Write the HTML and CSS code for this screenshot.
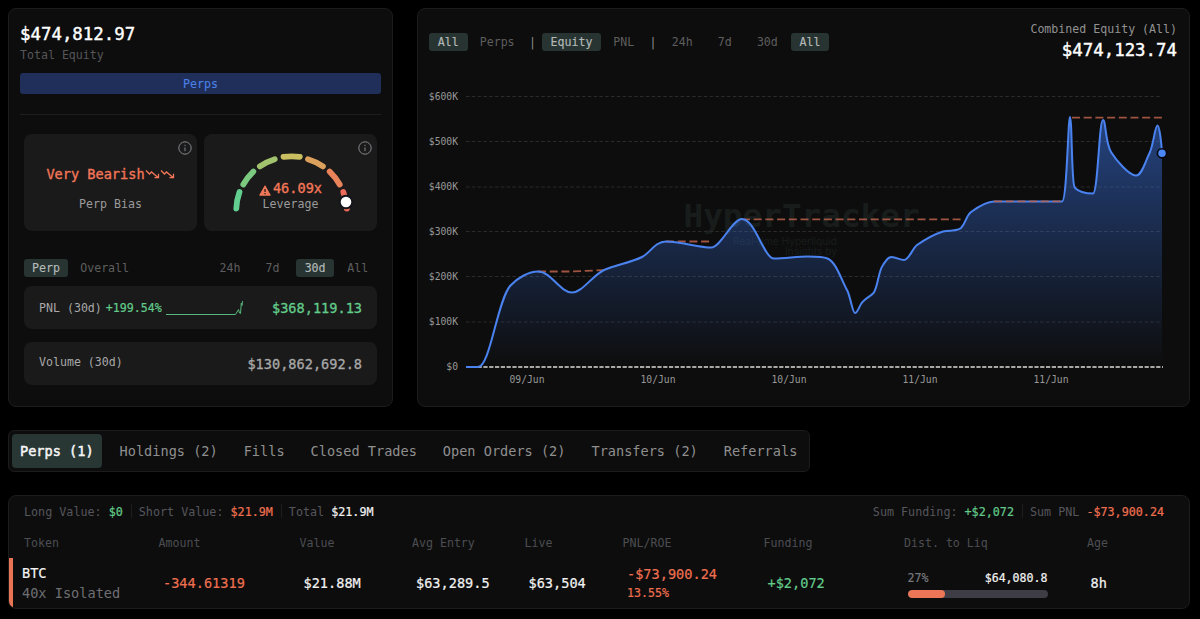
FILE: index.html
```
<!DOCTYPE html>
<html lang="en">
    <head>
        <meta charset="utf-8" />
        <meta name="viewport" content="width=device-width, initial-scale=1" />
        <title>HyperTracker</title>
        <link rel="stylesheet" href="styles.css">
    </head>
    <body>
        <div class="top">
            <section class="card summary">
                <div class="equity">$474,812.97</div>
                <div class="equity-label">Total Equity</div>
                <div class="perps-bar">Perps</div>
                <hr />

                <div class="stats">
                    <div class="stat">
                        <svg class="info" viewBox="0 0 14 14"><circle cx="7" cy="7" r="6.2" /><path d="M7 6.4v3.8M7 3.8v1.2" /></svg>
                        <div class="stat-value">Very Bearish<svg class="trend" viewBox="0 0 15 10"><path d="M1 1.5l3.5 3.5 2-2 6.500 5.5M9.5 8.6h4V4.8" /></svg><svg class="trend" viewBox="0 0 15 10"><path d="M1 1.5l3.5 3.5 2-2 6.500 5.5M9.5 8.6h4V4.8" /></svg></div>
                        <div class="stat-label">Perp Bias</div>
                    </div>
                    <div class="stat leverage">
                        <svg class="info" viewBox="0 0 14 14"><circle cx="7" cy="7" r="6.2" /><path d="M7 6.4v3.8M7 3.8v1.2" /></svg>
                        <svg class="gauge" viewBox="203.5 134 173 97">
                            <path d="M235.8 208.5A55 55 0 0 1 239 192" stroke="#62ce8f" />
                            <path d="M242.8 184.5A55 55 0 0 1 252.8 171.6" stroke="#7cc980" />
                            <path d="M259.4 166.4A55 55 0 0 1 274.2 159.2" stroke="#a2c36e" />
                            <path d="M283 156.9A55 55 0 0 1 299.3 156.9" stroke="#c9be60" />
                            <path d="M307.5 159.2A55 55 0 0 1 322.4 166.4" stroke="#dba05c" />
                            <path d="M329.2 171.6A55 55 0 0 1 339.2 184.5" stroke="#e9845a" />
                            <path d="M342.8 192A55 55 0 0 1 346.3 208.6" stroke="#ec6a59" />
                            <circle cx="345.5" cy="202" r="6.3" fill="#fff" stroke="#14161c" stroke-width="2" />
                        </svg>
                        <div class="stat-value"><svg class="warn" viewBox="0 0 12 11"><path d="M6 .8L11.3 10.2H.7z" fill="#f07858" stroke="#f07858" stroke-linejoin="round" /><path d="M6 4v3M6 8v1.2" stroke="#1a1a1a" stroke-width="1.2" /></svg>46.09x</div>
                        <div class="stat-label">Leverage</div>
                    </div>
                </div>

                <div class="filters">
                    <span class="pill active">Perp</span>
                    <span class="pill">Overall</span>
                    <span class="spacer"></span>
                    <span class="pill">24h</span>
                    <span class="pill">7d</span>
                    <span class="pill active">30d</span>
                    <span class="pill">All</span>
                </div>

                <div class="line">
                    <span>PNL (30d)</span>
                    <span class="pct green">+199.54%</span>
                    <svg class="spark" viewBox="0 0 78 18"><path d="M0 15.5H69.5L71 13L72.5 10.5L73.5 14L74.5 14.5L75.3 4L76 6.5L76.5 2" /></svg>
                    <span class="amount green">$368,119.13</span>
                </div>
                <div class="line volume">
                    <span>Volume (30d)</span>
                    <span class="amount">$130,862,692.8</span>
                </div>
            </section>

            <section class="card chart-card">
                <div class="chart-head">
                    <div class="filters">
                        <span class="pill active">All</span>
                        <span class="pill">Perps</span>
                        <span class="sep">|</span>
                        <span class="pill active">Equity</span>
                        <span class="pill">PNL</span>
                        <span class="sep">|</span>
                        <span class="pill">24h</span>
                        <span class="pill">7d</span>
                        <span class="pill">30d</span>
                        <span class="pill active">All</span>
                    </div>
                    <div class="combined">
                        <div class="combined-label">Combined Equity (All)</div>
                        <div class="combined-value">$474,123.74</div>
                    </div>
                </div>
                <svg class="chart" viewBox="418 72 771 334">
                    <defs>
                        <linearGradient id="fill" gradientUnits="userSpaceOnUse" x1="0" y1="117" x2="0" y2="367">
                            <stop offset="0" stop-color="#3b76ea" stop-opacity="0.52" />
                            <stop offset="1" stop-color="#3b76ea" stop-opacity="0" />
                        </linearGradient>
                    </defs>
                    <g class="watermark">
                        <text class="wm-title" x="683.5" y="227">HyperTracker</text>
                        <text x="837" y="244.5">Real-time Hyperliquid</text>
                        <text x="837" y="255">Insights by</text>
                    </g>
                    <g class="grid">
                        <path d="M466 96.5H1162M466 141.5H1162M466 187H1162M466 231.5H1162M466 276.5H1162M466 322H1162" />
                    </g>
                    <path class="zero" d="M466 367H1163" />
                    <path fill="url(#fill)" d="M466 367H478C490 367 497 302 510 286C517 278 529 271.5 538 271.5C551 271.5 560 292.5 572 292.5C582 292.5 592 276 604 270C616 264.5 630 263 642 257C650 253 655 241.5 666 241.5C680 241.5 699 247.5 711 247.5C721 247.5 732 219 742 219C755 219 764 258.5 774 258.5C785 258.5 797 256.5 808 256.5C816 256.5 823 256.5 827.5 258.5C836 262 841 279 847.5 291C851 299 852.5 313 855 313C858 313 859.5 304 863.5 301C867 297.5 871 296 873.5 293C878 287 878 272 883 265C886 260.5 888 257 891.5 257C896 257 900 260 904 260C909 260 912 249 917 245C925 239.5 935 234 943 231.5C950 230 957 231.5 961 228C966 223 966 216 971 212C978 207 986 201.5 994 201.5H1062C1067 201.5 1068 117 1070 117C1072 117 1071.5 182 1074.5 187C1077 191.5 1086 193.5 1093 193.5C1098 193.5 1099 120 1103 120C1106 120 1105 142 1111 152C1116 160 1129 175.5 1136 175.5C1142 175.5 1145 162 1150 152C1154 142 1155 125.5 1157.5 125.5C1159.5 125.5 1161.5 144 1162 153V367Z" />
                    <g class="ath">
                        <path d="M538 271.5H572L606 270" />
                        <path d="M666 241.5H712" />
                        <path d="M742 219.3H963" />
                    </g>
                    <path class="curve" d="M466 367H478C490 367 497 302 510 286C517 278 529 271.5 538 271.5C551 271.5 560 292.5 572 292.5C582 292.5 592 276 604 270C616 264.5 630 263 642 257C650 253 655 241.5 666 241.5C680 241.5 699 247.5 711 247.5C721 247.5 732 219 742 219C755 219 764 258.5 774 258.5C785 258.5 797 256.5 808 256.5C816 256.5 823 256.5 827.5 258.5C836 262 841 279 847.5 291C851 299 852.5 313 855 313C858 313 859.5 304 863.5 301C867 297.5 871 296 873.5 293C878 287 878 272 883 265C886 260.5 888 257 891.5 257C896 257 900 260 904 260C909 260 912 249 917 245C925 239.5 935 234 943 231.5C950 230 957 231.5 961 228C966 223 966 216 971 212C978 207 986 201.5 994 201.5H1062C1067 201.5 1068 117 1070 117C1072 117 1071.5 182 1074.5 187C1077 191.5 1086 193.5 1093 193.5C1098 193.5 1099 120 1103 120C1106 120 1105 142 1111 152C1116 160 1129 175.5 1136 175.5C1142 175.5 1145 162 1150 152C1154 142 1155 125.5 1157.5 125.5C1159.5 125.5 1161.5 144 1162 153" />
                    <g class="ath">
                        <path d="M994 201.3H1062" />
                        <path d="M1072 117.6H1162" />
                    </g>
                    <circle cx="1162" cy="153.3" r="4.6" fill="#4a86f5" stroke="#05070d" stroke-width="1.6" />
                    <g class="axis y-axis">
                        <text x="458" y="99.5">$600K</text>
                        <text x="458" y="144.5">$500K</text>
                        <text x="458" y="190">$400K</text>
                        <text x="458" y="234.5">$300K</text>
                        <text x="458" y="279.5">$200K</text>
                        <text x="458" y="325">$100K</text>
                        <text x="458" y="370">$0</text>
                    </g>
                    <g class="axis x-axis">
                        <text x="527" y="383">09/Jun</text>
                        <text x="658" y="383">10/Jun</text>
                        <text x="789" y="383">10/Jun</text>
                        <text x="920" y="383">11/Jun</text>
                        <text x="1051" y="383">11/Jun</text>
                    </g>
                </svg>
            </section>
        </div>

        <nav class="tabs">
            <a class="active">Perps (1)</a>
            <a>Holdings (2)</a>
            <a>Fills</a>
            <a>Closed Trades</a>
            <a>Open Orders (2)</a>
            <a>Transfers (2)</a>
            <a>Referrals</a>
        </nav>

        <section class="card positions">
            <div class="totals">
                <span>Long Value: <b class="green">$0</b></span>
                <span>Short Value: <b class="red">$21.9M</b></span>
                <span>Total <b>$21.9M</b></span>
                <span class="spacer"></span>
                <span>Sum Funding: <b class="green">+$2,072</b></span>
                <span>Sum PNL <b class="red">-$73,900.24</b></span>
            </div>
            <div class="row head">
                <span>Token</span>
                <span>Amount</span>
                <span>Value</span>
                <span>Avg Entry</span>
                <span>Live</span>
                <span>PNL/ROE</span>
                <span>Funding</span>
                <span>Dist. to Liq</span>
                <span>Age</span>
            </div>
            <div class="row position">
                <div class="token">BTC<br /><span class="mode">40x Isolated</span></div>
                <div class="red">-344.61319</div>
                <div>$21.88M</div>
                <div>$63,289.5</div>
                <div>$63,504</div>
                <div class="pnl red">-$73,900.24<br /><small>13.55%</small></div>
                <div class="green">+$2,072</div>
                <div class="liq">
                    <div class="liq-text"><span>27%</span><b>$64,080.8</b></div>
                    <div class="liq-bar"><div style="width: 27%"></div></div>
                </div>
                <div>8h</div>
            </div>
        </section>
    </body>
</html>
```
FILE: styles.css
```
* {
    box-sizing: border-box;
}
body {
    background-color: #000;
    color: #f2f2f2;
    font: 11.6px/16px "DejaVu Sans Mono", monospace;
    margin: 0;
    padding: 8px 10px 0 8px;
    overflow: hidden;
}
.card {
    background: #0d0d0d;
    border: 1px solid #1c1c1c;
    border-radius: 8px;
}
.green {
    color: #62cb8a;
}
.red {
    color: #ee7050;
}
.spacer {
    flex: 1;
}
.top {
    display: flex;
    gap: 24px;
    height: 399px;
}

/* summary */
.summary {
    width: 385px;
    padding: 14px 11px 0;
}
.equity {
    font-size: 17.4px;
    line-height: 23px;
    color: #fff;
    -webkit-text-stroke: 0.4px;
}
.equity-label {
    color: #55565a;
    margin-top: 1px;
}
.perps-bar {
    background: #1f2f59;
    color: #4b80e6;
    border-radius: 3px;
    height: 21px;
    line-height: 22px;
    margin-top: 10px;
    text-align: center;
    -webkit-text-stroke: 0.1px;
}
hr {
    border: 0;
    border-top: 1px solid #1e1e1e;
    margin: 20px 0 0;
}
.stats {
    display: flex;
    gap: 7px;
    margin: 19px 4px 0;
}
.stat {
    position: relative;
    flex: 1;
    height: 97px;
    padding-top: 31px;
    background: #1a1a1a;
    border-radius: 8px;
    text-align: center;
}
.info {
    position: absolute;
    top: 7px;
    right: 5px;
    width: 14px;
    height: 14px;
    fill: none;
    stroke: #85888c;
}
.stat-value {
    font-size: 13.6px;
    line-height: 18px;
    color: #f27658;
    white-space: nowrap;
    -webkit-text-stroke: 0.35px;
}
.stat-label {
    color: #9b9b9b;
    margin-top: 13px;
}
.trend {
    width: 15px;
    height: 10px;
    fill: none;
    stroke: #f27658;
    stroke-width: 1.3;
}
.gauge {
    position: absolute;
    inset: 0;
    width: 100%;
    height: 100%;
    fill: none;
    stroke-width: 5.8;
    stroke-linecap: round;
}
.leverage {
    padding-top: 45px;
}
.leverage .stat-label {
    margin-top: -1px;
}
.warn {
    width: 12px;
    height: 11px;
    margin-right: 2px;
    vertical-align: -3px;
}
.filters {
    display: flex;
    gap: 4px;
}
.summary .filters {
    margin: 28px 4px 0;
}
.pill {
    min-width: 38.6px;
    height: 18px;
    line-height: 18px;
    padding: 0 8.1px;
    border-radius: 3px;
    text-align: center;
    color: #5e5e5e;
}
.pill.active {
    background: #273432;
    color: #b4b9b7;
    -webkit-text-stroke: 0.15px;
}
.sep {
    line-height: 18px;
    margin: 0 2.4px;
    color: #8a8a8a;
}
.line {
    display: flex;
    align-items: center;
    height: 43px;
    margin: 9px 4px 0;
    padding: 0 15px;
    background: #1a1a1a;
    border-radius: 8px;
    color: #a8a8a8;
}
.line.volume {
    margin-top: 13px;
    padding-bottom: 4px;
}
.pct {
    margin-left: 4px;
    -webkit-text-stroke: 0.2px;
}
.spark {
    width: 78px;
    height: 18px;
    margin-left: 4px;
    fill: none;
    stroke: #55b97d;
}
.amount {
    margin-left: auto;
    font-size: 13.6px;
    -webkit-text-stroke: 0.3px;
}
.volume .amount {
    padding-top: 4px;
}

/* chart */
.chart-card {
    flex: 1;
}
.chart-head {
    display: flex;
    justify-content: space-between;
    height: 63px;
    padding: 12px 12px 0 11px;
}
.chart-head .filters {
    margin-top: 12px;
}
.combined {
    text-align: right;
}
.combined-label {
    color: #929292;
}
.combined-value {
    font-size: 17.4px;
    line-height: 26px;
    color: #fff;
    -webkit-text-stroke: 0.4px;
}
.chart {
    display: block;
    width: 771px;
    height: 334px;
    fill: none;
}
.watermark {
    fill: #181d1c;
    font: 10.2px Inter, sans-serif;
    text-anchor: end;
}
.wm-title {
    font: bold 32.7px "DejaVu Sans Mono", monospace;
    text-anchor: start;
}
.grid {
    stroke: #2b2b2b;
    stroke-dasharray: 3.5 2.3;
}
.zero {
    stroke: #dcdcd8;
    stroke-width: 1.4;
    stroke-dasharray: 4.2 1.6;
}
.ath {
    stroke: #b8614b;
    stroke-width: 1.8;
    stroke-dasharray: 8 3.7;
    opacity: 0.85;
}
.curve {
    stroke: #4a83f0;
    stroke-width: 2;
}
.axis {
    fill: #989898;
    font-size: 9.7px;
}
.y-axis {
    text-anchor: end;
}
.x-axis {
    text-anchor: middle;
}

/* tabs */
.tabs {
    display: flex;
    gap: 10px;
    width: 802px;
    height: 42px;
    margin-top: 23px;
    padding: 3px;
    background: #0d0d0d;
    border: 1px solid #1c1c1c;
    border-radius: 6px;
    font-size: 13.58px;
    line-height: 34px;
    color: #8f8f8f;
}
.tabs a {
    padding: 0 8px;
    border-radius: 4px;
    white-space: nowrap;
}
.tabs .active {
    background: #283734;
    color: #f5f5f5;
    -webkit-text-stroke: 0.5px;
}

/* positions */
.positions {
    height: 114px;
    margin-top: 23px;
    overflow: hidden;
}
.totals {
    display: flex;
    padding: 8px 25px 0 15px;
    color: #55565c;
    font-size: 11.72px;
}
.totals span + span:not(.spacer) {
    margin-left: 8px;
    padding-left: 7px;
    border-left: 1px solid #1e1e1e;
    height: 14px;
    line-height: 16px;
}
.totals .spacer + span:not(.spacer) {
    border: 0;
}
.totals b,
.liq b {
    font-weight: normal;
    -webkit-text-stroke: 0.2px;
}
.totals b:not([class]) {
    color: #f2f2f2;
}
.row {
    display: grid;
    grid-template-columns: 134.5px 141px 112.5px 112.5px 98px 141px 140.5px 183px 1fr;
    align-items: center;
}
.head {
    padding-left: 15px;
    margin-top: 15px;
    color: #4c4d52;
}
.position {
    grid-template-columns: 141px 140.5px 112.5px 112.5px 98.5px 140.5px 140px 183px 1fr;
    height: 50px;
    margin-top: 7px;
    padding-left: 9px;
    border-left: 5px solid #e97555;
    font-size: 13.6px;
    line-height: 20px;
    margin-left: -1px;
    -webkit-text-stroke: 0.2px;
}
.mode {
    color: #6e6f73;
    -webkit-text-stroke: 0;
}
.pnl {
    line-height: 18px;
    padding-top: 1px;
}
.pnl small {
    font-size: 11.6px;
}
.liq {
    width: 140px;
    padding-top: 1px;
    font-size: 11.6px;
    line-height: 16px;
}
.liq-text {
    display: flex;
    justify-content: space-between;
}
.liq-text span {
    color: #77787d;
}
.liq-bar {
    height: 8px;
    margin-top: 4px;
    border-radius: 4px;
    background: #3e3d46;
    overflow: hidden;
}
.liq-bar div {
    height: 8px;
    border-radius: 4px;
    background: #ec7655;
}
```
